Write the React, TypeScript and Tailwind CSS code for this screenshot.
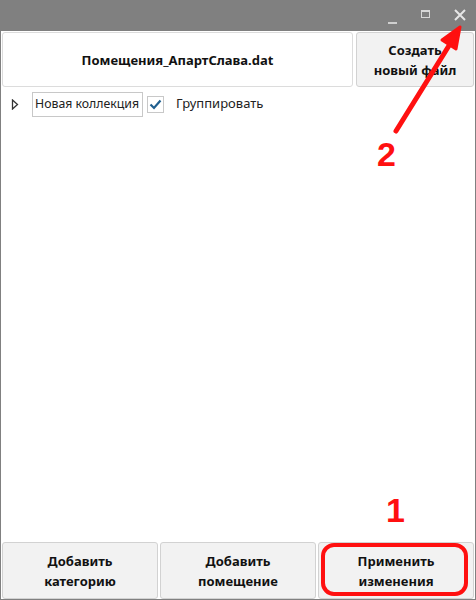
import React from "react";

const font = { fontFamily: '"Segoe UI", "Noto Sans", "Open Sans", sans-serif' };

function Btn({ children, white }: { children: React.ReactNode; white?: boolean }) {
  return (
    <div
      className={
        "flex items-center justify-center text-center rounded-[3px] border text-[13px] font-bold leading-[20px] text-[#111] " +
        (white ? "bg-white border-[#dcdcdc]" : "bg-[#f2f2f2] border-[#d2d2d2]")
      }
    >
      {children}
    </div>
  );
}

export default function App() {
  return (
    <div className="relative w-[476px] h-[600px] bg-[#808080] flex flex-col overflow-hidden" style={font}>
      {/* title bar */}
      <div className="h-[31px] flex items-center justify-end pr-[10px] gap-[24px]">
        <div className="w-[9px] h-[10px] flex items-end"><div className="w-[9px] h-[2px] bg-[#cfcfcf] mb-[-3px]" /></div>
        <div className="w-[9px] h-[8px] border border-[#d8d8d8] border-t-2 mt-[-4px]" />
        <svg width="12" height="12" viewBox="0 0 12 12" className="mt-[-2px]">
          <path d="M1 1 L11 11 M11 1 L1 11" stroke="#e6e6e6" strokeWidth="2" />
        </svg>
      </div>
      {/* body */}
      <div className="flex-1 bg-white mx-px mb-px flex flex-col">
        <div className="h-[56px] flex gap-[3px] px-px pt-px">
          <div className="flex-1 grid"><Btn white>Помещения_АпартСлава.dat</Btn></div>
          <div className="w-[118px] grid"><Btn>Создать<br />новый файл</Btn></div>
        </div>
        <div className="flex items-center h-[28px] mt-[3px] pl-[10px] text-[13px] text-[#222] whitespace-nowrap">
          <svg width="8" height="11" viewBox="0 0 8 11" className="mr-[13px] shrink-0">
            <path d="M1.5 1 L6.5 5.5 L1.5 10 Z" fill="none" stroke="#333" strokeWidth="1.3" />
          </svg>
          <div className="w-[111px] shrink-0 h-[25px] border border-[#c8c8c8] flex items-center pl-[2px] leading-none text-[12.3px] overflow-hidden">Новая коллекция</div>
          <div className="ml-[4px] shrink-0 w-[17px] h-[17px] border border-[#c8c8c8] flex items-center justify-center">
            <svg width="13" height="11" viewBox="0 0 13 11">
              <path d="M1.5 5.5 L5 9 L11.5 1.5" fill="none" stroke="#1f5f8f" strokeWidth="2.2" />
            </svg>
          </div>
          <span className="ml-[12px]">Группировать</span>
        </div>
        <div className="flex-1" />
        <div className="h-[57px] grid grid-cols-3 gap-[2px] px-px">
          <Btn>Добавить<br />категорию</Btn>
          <Btn>Добавить<br />помещение</Btn>
          <Btn>Применить<br />изменения</Btn>
        </div>
      </div>

      {/* annotations */}
      <div className="absolute left-[386px] top-[493px] text-[34px] font-bold text-[#ff1010] leading-none" style={{ fontFamily: '"Liberation Sans", Arial, sans-serif' }}>1</div>
      <div className="absolute left-[377px] top-[137px] text-[34px] font-bold text-[#ff1010] leading-none" style={{ fontFamily: '"Liberation Sans", Arial, sans-serif' }}>2</div>
      <div className="absolute left-[321px] top-[543px] w-[147px] h-[53px] border-[4px] border-[#ff1010] rounded-[13px]" />
      <svg className="absolute left-0 top-0" width="476" height="600" viewBox="0 0 476 600">
        <line x1="396" y1="131" x2="450" y2="44" stroke="#ff1010" strokeWidth="5" strokeLinecap="round" />
        <path d="M460 27 L442 40 L456 49 Z" fill="#ff1010" stroke="#ff1010" strokeWidth="3" strokeLinejoin="round" />
      </svg>
    </div>
  );
}
